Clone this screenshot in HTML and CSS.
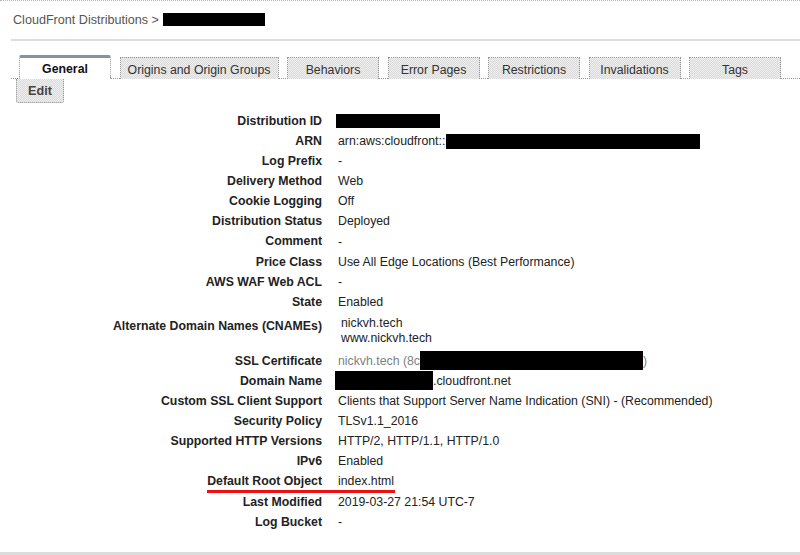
FILE: index.html
```html
<!DOCTYPE html>
<html>
<head>
<meta charset="utf-8">
<link rel="stylesheet" href="styles.css">
</head>
<body>
<div class="page">
  <div class="crumb">CloudFront Distributions &gt; <span class="redact crumb-redact"></span></div>
  <div class="rule"></div>
  <div class="tabs">
    <div class="tab active">General</div>
    <div class="tab wide">Origins and Origin Groups</div>
    <div class="tab">Behaviors</div>
    <div class="tab">Error Pages</div>
    <div class="tab">Restrictions</div>
    <div class="tab">Invalidations</div>
    <div class="tab">Tags</div>
    <div class="tab-fill"></div>
  </div>
  <div class="toolbar"><button class="btn">Edit</button></div>
  <div class="details">
    <div class="row"><div class="label">Distribution ID</div><div class="value"><span class="redact id-redact"></span></div></div>
    <div class="row"><div class="label">ARN</div><div class="value">arn:aws:cloudfront::<span class="redact arn-redact"></span></div></div>
    <div class="row"><div class="label">Log Prefix</div><div class="value">-</div></div>
    <div class="row"><div class="label">Delivery Method</div><div class="value">Web</div></div>
    <div class="row"><div class="label">Cookie Logging</div><div class="value">Off</div></div>
    <div class="row"><div class="label">Distribution Status</div><div class="value">Deployed</div></div>
    <div class="row"><div class="label">Comment</div><div class="value">-</div></div>
    <div class="row"><div class="label">Price Class</div><div class="value">Use All Edge Locations (Best Performance)</div></div>
    <div class="row"><div class="label">AWS WAF Web ACL</div><div class="value">-</div></div>
    <div class="row"><div class="label">State</div><div class="value">Enabled</div></div>
    <div class="row multi"><div class="label">Alternate Domain Names (CNAMEs)</div><div class="value list"><div>nickvh.tech</div><div>www.nickvh.tech</div></div></div>
    <div class="row"><div class="label">SSL Certificate</div><div class="value muted">nickvh.tech (8c<span class="redact cert-redact"></span>)</div></div>
    <div class="row"><div class="label">Domain Name</div><div class="value"><span class="redact domain-redact"></span>.cloudfront.net</div></div>
    <div class="row"><div class="label">Custom SSL Client Support</div><div class="value">Clients that Support Server Name Indication (SNI) - (Recommended)</div></div>
    <div class="row"><div class="label">Security Policy</div><div class="value">TLSv1.1_2016</div></div>
    <div class="row"><div class="label">Supported HTTP Versions</div><div class="value">HTTP/2, HTTP/1.1, HTTP/1.0</div></div>
    <div class="row"><div class="label">IPv6</div><div class="value">Enabled</div></div>
    <div class="row marked"><div class="label">Default Root Object</div><div class="value">index.html</div><span class="mark"></span></div>
    <div class="row"><div class="label">Last Modified</div><div class="value">2019-03-27 21:54 UTC-7</div></div>
    <div class="row"><div class="label">Log Bucket</div><div class="value">-</div></div>
  </div>
  <div class="footer-rule"></div>
</div>
</body>
</html>
```
FILE: styles.css
```css
* { box-sizing: border-box; }
html, body { margin: 0; padding: 0; background: #fff; }
body {
  font-family: "Liberation Sans", Arial, Helvetica, sans-serif;
  font-size: 12.3px;
  color: #222;
  width: 800px;
  height: 555px;
  overflow: hidden;
}
.page {
  border-top: 1px dotted #b5b5b5;
  height: 555px;
  display: flex;
  flex-direction: column;
}
.crumb {
  color: #555;
  padding: 11px 0 0 13px;
  height: 38px;
  line-height: 16px;
  display: flex;
  align-items: flex-start;
  font-size: 12.6px;
}
.redact { display: inline-block; background: #000; vertical-align: middle; }
.crumb-redact { width: 102px; height: 13px; margin-left: 4px; margin-top: 1px; }
.rule { margin-left: 11px; height: 2px; background: #dcdcdc; }
.tabs {
  display: flex;
  align-items: flex-end;
  gap: 8.5px;
  margin-top: 13px;
  padding-left: 19px;
  height: 25px;
  position: relative;
}
.tabs::before {
  content: "";
  position: absolute;
  left: 11px; right: 0; bottom: 0;
  border-bottom: 1px dotted #999;
}
.tab {
  width: 92px;
  height: 22px;
  border: 1px dotted #999;
  border-bottom: none;
  background: repeating-conic-gradient(#dadada 0 25%, #efefef 0 50%) 0 0 / 2px 2px;
  text-align: center;
  line-height: 24px;
  color: #333;
  position: relative;
  z-index: 1;
}
.tab.active {
  background: #fff;
  border-top: 3px solid #8a929c;
  border-radius: 2px 2px 0 0;
  font-weight: bold;
  color: #111;
  line-height: 23px;
  height: 24px;
}
.tab.wide { width: 159px; }
.tab-fill { flex: 1; }
.toolbar { padding-left: 16px; height: 24px; }
.btn {
  font-family: inherit;
  font-size: 12.6px;
  font-weight: bold;
  color: #444;
  width: 48px;
  height: 24px;
  padding: 0;
  border: 1px dotted #999;
  border-top: none;
  background: repeating-conic-gradient(#dadada 0 25%, #efefef 0 50%) 0 0 / 2px 2px;
  border-radius: 0 0 2px 2px;
}
.details { margin-top: 8px; }
.row {
  display: grid;
  grid-template-columns: 322px 1fr;
  column-gap: 16px;
  height: 20px;
  line-height: 20px;
  position: relative;
}
.row:nth-child(n+2) { height: 20.1px; }
.label { text-align: right; font-weight: bold; color: #222; }
.value { color: #222; white-space: nowrap; display: flex; align-items: center; }
.value.muted { color: #7b7f86; }
.row.multi { height: 39px; }
.row.multi .label { padding-top: 4px; }
.value.list {
  display: block;
  padding: 4px 0 0 3px;
  line-height: 15px;
}
.id-redact { width: 104px; height: 14px; margin-left: -2px; }
.arn-redact { width: 254px; height: 15px; margin-left: 1px; }
.cert-redact { width: 223px; height: 19px; margin-top: -1px; }
.domain-redact { width: 98px; height: 19px; margin-left: -3px; }
.mark {
  position: absolute;
  left: 207px;
  width: 188px;
  bottom: -1px;
  height: 3px;
  background: #ee1111;
}
.footer-rule { margin-top: auto; height: 3px; background: #dcdcdc; }
```
